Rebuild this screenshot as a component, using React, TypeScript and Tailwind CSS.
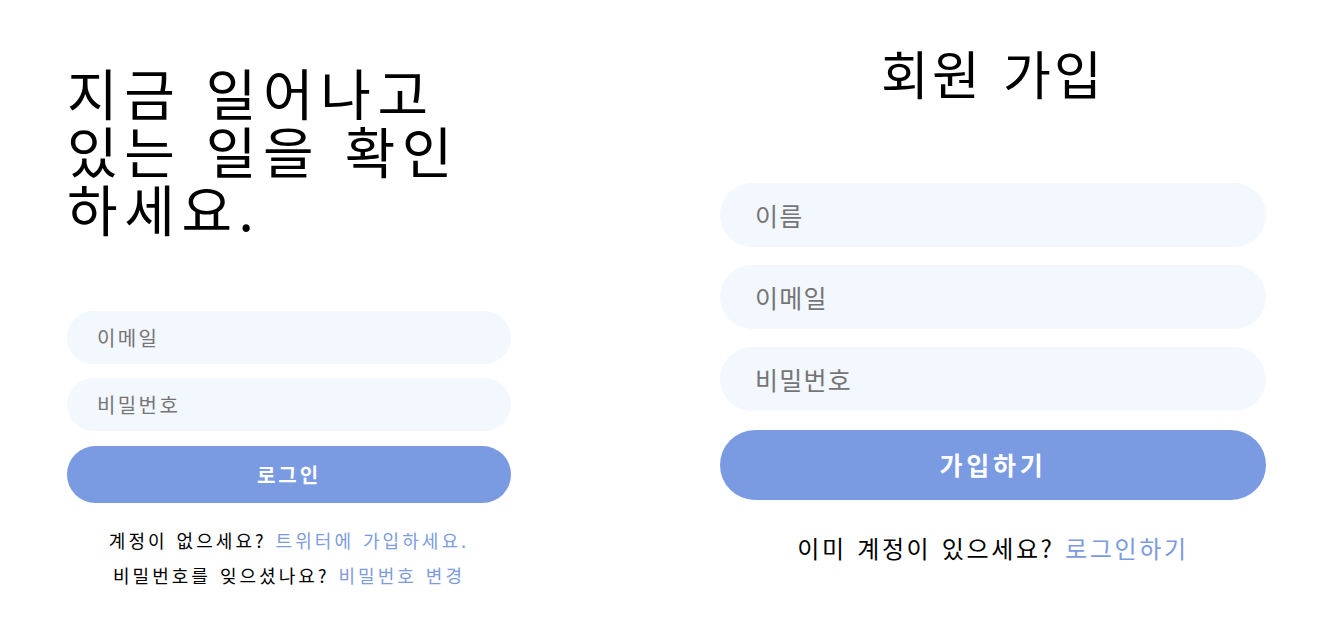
const font = { fontFamily: '"Noto Sans CJK KR", "Noto Sans", sans-serif' };

function Field({ placeholder, type = "text", className }: { placeholder: string; type?: string; className: string }) {
  return (
    <input
      type={type}
      placeholder={placeholder}
      className={`w-full rounded-full bg-[#f3f7fe] text-black outline-none placeholder:text-[#757575] ${className}`}
    />
  );
}

function LoginPanel() {
  return (
    <div className="flex w-[444px] flex-col">
      <h1 className="mt-[62px] w-[412px] text-[55px] font-normal leading-[58px] tracking-[0.12em] text-black [word-spacing:0.1em]">
        지금 일어나고 있는 일을 확인하세요.
      </h1>
      <form className="mt-[75px] flex flex-col" onSubmit={(e) => e.preventDefault()}>
        <Field placeholder="이메일" className="h-[53px] px-[30px] text-[20px] tracking-[0.12em]" />
        <Field placeholder="비밀번호" type="password" className="mt-[14px] h-[53px] px-[30px] text-[20px] tracking-[0.12em]" />
        <button className="mt-[15px] h-[57px] w-full rounded-full bg-[#7a9ae2] text-[20px] font-bold tracking-[0.15em] text-white">
          로그인
        </button>
      </form>
      <div className="mt-[20px] flex flex-col items-center text-[18px] leading-[35px] tracking-[0.17em] text-black [word-spacing:0.1em]">
        <p>
          계정이 없으세요? <a className="text-[#7d9be0]">트위터에 가입하세요.</a>
        </p>
        <p>
          비밀번호를 잊으셨나요? <a className="text-[#7d9be0]">비밀번호 변경</a>
        </p>
      </div>
    </div>
  );
}

function SignupPanel() {
  return (
    <div className="flex w-[546px] flex-col">
      <h2 className="mt-[38px] text-center text-[52px] font-normal leading-[70px] tracking-[0.06em] text-black [word-spacing:0.1em]">
        회원 가입
      </h2>
      <form className="mt-[75px] flex flex-col" onSubmit={(e) => e.preventDefault()}>
        <Field placeholder="이름" className="h-[64px] px-[35px] text-[25px] tracking-[0.05em]" />
        <Field placeholder="이메일" className="mt-[18px] h-[64px] px-[35px] text-[25px] tracking-[0.05em]" />
        <Field placeholder="비밀번호" type="password" className="mt-[18px] h-[64px] px-[35px] text-[25px] tracking-[0.05em]" />
        <button className="mt-[19px] h-[70px] w-full rounded-full bg-[#7a9ae2] text-[25px] font-bold tracking-[0.15em] text-white">
          가입하기
        </button>
      </form>
      <p className="mt-[30px] text-center text-[24px] leading-[36px] tracking-[0.11em] text-black [word-spacing:0.1em]">
        이미 계정이 있으세요? <a className="text-[#7d9be0]">로그인하기</a>
      </p>
    </div>
  );
}

export default function App() {
  return (
    <div className="flex h-[632px] w-[1320px] bg-white pl-[67px]" style={font}>
      <LoginPanel />
      <div className="ml-[209px]">
        <SignupPanel />
      </div>
    </div>
  );
}
